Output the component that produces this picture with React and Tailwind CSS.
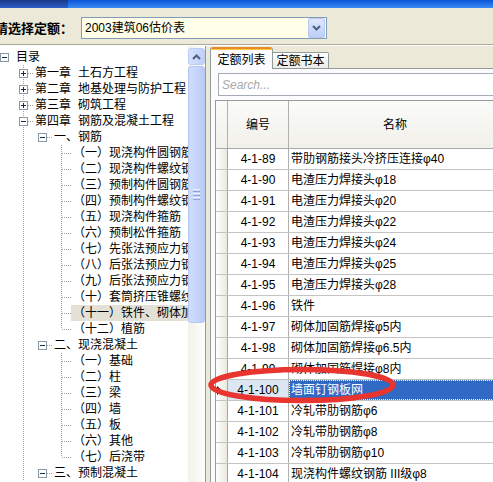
import React from 'react';

const treeRows = [
  { lv: 0, t: '目录', box: 'minus' },
  { lv: 1, t: ['第一章', '土石方工程'], box: 'plus' },
  { lv: 1, t: ['第二章', '地基处理与防护工程'], box: 'plus' },
  { lv: 1, t: ['第三章', '砌筑工程'], box: 'plus' },
  { lv: 1, t: ['第四章', '钢筋及混凝土工程'], box: 'minus' },
  { lv: 2, t: '一、钢筋', box: 'minus' },
  { lv: 3, t: '（一）现浇构件圆钢筋' },
  { lv: 3, t: '（二）现浇构件螺纹钢筋' },
  { lv: 3, t: '（三）预制构件圆钢筋' },
  { lv: 3, t: '（四）预制构件螺纹钢筋' },
  { lv: 3, t: '（五）现浇构件箍筋' },
  { lv: 3, t: '（六）预制松件箍筋' },
  { lv: 3, t: '（七）先张法预应力钢筋' },
  { lv: 3, t: '（八）后张法预应力钢筋' },
  { lv: 3, t: '（九）后张法预应力钢筋' },
  { lv: 3, t: '（十）套筒挤压锥螺纹' },
  { lv: 3, t: '（十一）铁件、砌体加固筋', hl: true },
  { lv: 3, t: '（十二）植筋', last: true },
  { lv: 2, t: '二、现浇混凝土', box: 'minus' },
  { lv: 3, t: '（一）基础' },
  { lv: 3, t: '（二）柱' },
  { lv: 3, t: '（三）梁' },
  { lv: 3, t: '（四）墙' },
  { lv: 3, t: '（五）板' },
  { lv: 3, t: '（六）其他' },
  { lv: 3, t: '（七）后浇带', last: true },
  { lv: 2, t: '三、预制混凝土', box: 'minus' },
];

const gridRows = [
  ['4-1-89', '带肋钢筋接头冷挤压连接φ40'],
  ['4-1-90', '电渣压力焊接头φ18'],
  ['4-1-91', '电渣压力焊接头φ20'],
  ['4-1-92', '电渣压力焊接头φ22'],
  ['4-1-93', '电渣压力焊接头φ24'],
  ['4-1-94', '电渣压力焊接头φ25'],
  ['4-1-95', '电渣压力焊接头φ28'],
  ['4-1-96', '铁件'],
  ['4-1-97', '砌体加固筋焊接φ5内'],
  ['4-1-98', '砌体加固筋焊接φ6.5内'],
  ['4-1-99', '砌体加固筋焊接φ8内'],
  ['4-1-100', '墙面钉钢板网', true],
  ['4-1-101', '冷轧带肋钢筋φ6'],
  ['4-1-102', '冷轧带肋钢筋φ8'],
  ['4-1-103', '冷轧带肋钢筋φ10'],
  ['4-1-104', '现浇构件螺纹钢筋 III级φ8'],
];

const LINE = '#a0a0a0';

function Cell({ v, h, box }) {
  return (
    <svg width="19" height="16" className="block shrink-0">
      {v && (
        <line x1="9.5" y1="0" x2="9.5" y2={v === 'full' ? 16 : 8} stroke={LINE} strokeDasharray="1 1" />
      )}
      {h && <line x1="10" y1="8.5" x2="19" y2="8.5" stroke={LINE} strokeDasharray="1 1" />}
      {box && (
        <g>
          <rect x="5.5" y="4.5" width="8" height="8" fill="#ffffff" stroke="#8a97a6" />
          <line x1="7" y1="8.5" x2="12" y2="8.5" stroke="#1b2a3a" />
          {box === 'plus' && <line x1="9.5" y1="6" x2="9.5" y2="11" stroke="#1b2a3a" />}
        </g>
      )}
    </svg>
  );
}

function TreeRow({ r }) {
  let cells = [];
  if (r.lv === 0) {
    cells = [<Cell key="0" box={r.box} />];
  } else if (r.lv === 1) {
    cells = [<Cell key="0" />, <Cell key="1" v="full" h box={r.box} />];
  } else if (r.lv === 2) {
    cells = [<Cell key="0" />, <Cell key="1" v="full" />, <Cell key="2" h box={r.box} />];
  } else {
    cells = [
      <Cell key="0" />,
      <Cell key="1" v="full" />,
      <Cell key="2" />,
      <Cell key="3" v={r.last ? 'top' : 'full'} h />,
    ];
  }
  return (
    <div className="flex h-[16px] ml-[-5px] items-center">
      {cells}
      <span
        className={`whitespace-nowrap pl-[2px] pr-[2px] h-[16px] leading-[16px] text-[12px] text-black ${
          r.hl ? 'bg-[#e3e1d6]' : ''
        }`}
      >
        {Array.isArray(r.t) ? (
          <>
            {r.t[0]}
            <span className="inline-block w-[7px]" />
            {r.t[1]}
          </>
        ) : (
          r.t
        )}
      </span>
    </div>
  );
}

function Chevron({ up }) {
  return (
    <svg width="9" height="6" viewBox="0 0 9 6" className="block">
      <path
        d={up ? 'M1 5 L4.5 1.5 L8 5' : 'M1 1 L4.5 4.5 L8 1'}
        fill="none"
        stroke="#4d6185"
        strokeWidth="2"
      />
    </svg>
  );
}

export default function App() {
  return (
    <div className="relative w-[493px] h-[482px] overflow-hidden bg-[#ece9d8] flex flex-col font-['Liberation_Sans','Noto_Sans_CJK_SC',sans-serif] text-black">
      {/* title bar remnant */}
      <div className="h-[8px] shrink-0 flex bg-linear-to-b from-[#0b55da] to-[#3a8af5]">
        <div className="w-[68px] bg-linear-to-b from-[#1c3a86] to-[#2d5fc8]" />
      </div>

      {/* toolbar */}
      <div className="h-[36px] shrink-0 flex items-start pt-[9px]">
        <span className="ml-[-5px] w-[86px] shrink-0 mt-[3px] text-[13px] leading-[17px] font-bold whitespace-nowrap">
          请选择定额：
        </span>
        <div className="w-[246px] h-[22px] shrink-0 flex items-center border border-[#7f9db9] bg-[#ffffe9]">
          <span className="flex-1 pl-[3px] text-[12px] leading-[16px] whitespace-nowrap">2003建筑06估价表</span>
          <div className="w-[17px] h-[20px] mr-px flex items-center justify-center rounded-[2px] border border-[#b9c9ef] bg-linear-to-b from-[#dfe8fd] to-[#bccdf7]">
            <Chevron />
          </div>
        </div>
      </div>

      <div className="h-px shrink-0 bg-[#aca899]" />
      <div className="h-px shrink-0 bg-white" />

      {/* main */}
      <div className="flex flex-1 min-h-0">
        {/* tree panel */}
        <div className="w-[206px] shrink-0 flex bg-white border-r border-[#8a9ab8]">
          <div className="w-[188px] shrink-0 overflow-hidden pt-[3px]">
            {treeRows.map((r, i) => (
              <TreeRow key={i} r={r} />
            ))}
          </div>
          <div className="w-[17px] shrink-0 flex flex-col pt-[2px] bg-linear-to-r from-[#f2f1ea] to-[#fdfdfb]">
            <div className="h-[17px] flex items-center justify-center rounded-[3px] border border-[#bccbf1] bg-linear-to-r from-[#d5e1fd] to-[#bfd0f8]">
              <Chevron up />
            </div>
            <div className="h-[257px] mt-px flex flex-col items-center justify-center gap-[1px] rounded-[3px] border border-[#b4c6f2] bg-linear-to-r from-[#cfdcfc] via-[#c6d5fb] to-[#b9cbf6]">
              <div className="w-[7px] h-px bg-[#eef3fe]" />
              <div className="w-[7px] h-px bg-[#8ea6e0]" />
              <div className="w-[7px] h-px bg-[#eef3fe]" />
              <div className="w-[7px] h-px bg-[#8ea6e0]" />
              <div className="w-[7px] h-px bg-[#eef3fe]" />
              <div className="w-[7px] h-px bg-[#8ea6e0]" />
            </div>
          </div>
        </div>

        {/* right area */}
        <div className="flex-1 min-w-0 pl-[4px] pt-px flex flex-col">
          {/* tabs */}
          <div className="h-[22px] shrink-0 flex items-end w-[320px]">
            <div className="w-[63px] h-[22px] shrink-0 flex flex-col bg-[#fcfcfe] border-l border-r border-[#919b9c] rounded-t-[3px] overflow-hidden">
              <div className="h-[2px] bg-[#e68b2c]" />
              <div className="h-px bg-[#ffc83c]" />
              <div className="flex-1 flex items-center justify-center text-[12px] leading-[14px] pt-[1px]">定额列表</div>
            </div>
            <div className="w-[56px] h-[17px] shrink-0 flex items-center justify-center border-t border-r border-b border-[#919b9c] rounded-tr-[2px] bg-linear-to-b from-[#ffffff] to-[#ecebe5] text-[12px] leading-[14px] pt-[1px]">
              定额书本
            </div>
            <div className="flex-1 h-px bg-[#919b9c]" />
          </div>

          {/* panel */}
          <div className="flex-1 w-[320px] border-l border-[#919b9c] bg-[#fcfcfe] flex flex-col">
            <div className="ml-[7px] mt-[4px] h-[23px] shrink-0 border border-[#a5acb5] bg-white flex items-center">
              <span className="pl-[3px] text-[12px] italic text-[#a8a8a8] leading-[14px]">Search...</span>
            </div>
            <div className="ml-[4px] mt-[4px] flex-1 flex flex-col border-l border-t border-[#9a9a9a] bg-white">
              {/* header */}
              <div className="h-[48px] shrink-0 flex border-b border-[#a8a8a8] bg-linear-to-b from-[#fbfbf9] to-[#f1f0ea]">
                <div className="w-[12px] shrink-0 border-r border-[#b0b0b0]" />
                <div className="w-[61px] shrink-0 border-r border-[#b0b0b0] flex items-center justify-center text-[12px]">
                  编号
                </div>
                <div className="flex-1 flex items-center pl-[94px] text-[12px]">名称</div>
              </div>
              {gridRows.map(([code, name, sel], i) => (
                <div key={i} className="h-[21px] shrink-0 flex border-b border-[#c4c4c4]">
                  <div className="w-[12px] shrink-0 border-r border-[#a8a8a8] bg-linear-to-r from-[#ffffff] to-[#ebe9dd] flex items-center">
                    {sel && (
                      <svg width="5" height="9" viewBox="0 0 5 9" className="block ml-[1px]">
                        <path d="M0 0 L5 4.5 L0 9 Z" fill="#000" />
                      </svg>
                    )}
                  </div>
                  <div
                    className={`w-[61px] shrink-0 border-r border-[#b0b0b0] flex items-center justify-center text-[12px] leading-[14px] whitespace-nowrap ${
                      sel ? 'bg-[#dde7f3]' : ''
                    }`}
                  >
                    {code}
                  </div>
                  <div
                    className={`flex-1 flex items-center pl-[2px] text-[12px] leading-[14px] whitespace-nowrap ${
                      sel ? 'bg-[#316ac5] text-white outline-1 outline-dotted outline-offset-[-1px] outline-[#ffffff]' : ''
                    }`}
                  >
                    {name}
                  </div>
                </div>
              ))}
            </div>
          </div>
        </div>
      </div>

      {/* red annotation ellipse */}
      <svg className="absolute left-0 top-0 pointer-events-none" width="493" height="482">
        <ellipse cx="302" cy="385" rx="91" ry="15.5" fill="none" stroke="#e8352f" strokeWidth="5.5" />
      </svg>
    </div>
  );
}
